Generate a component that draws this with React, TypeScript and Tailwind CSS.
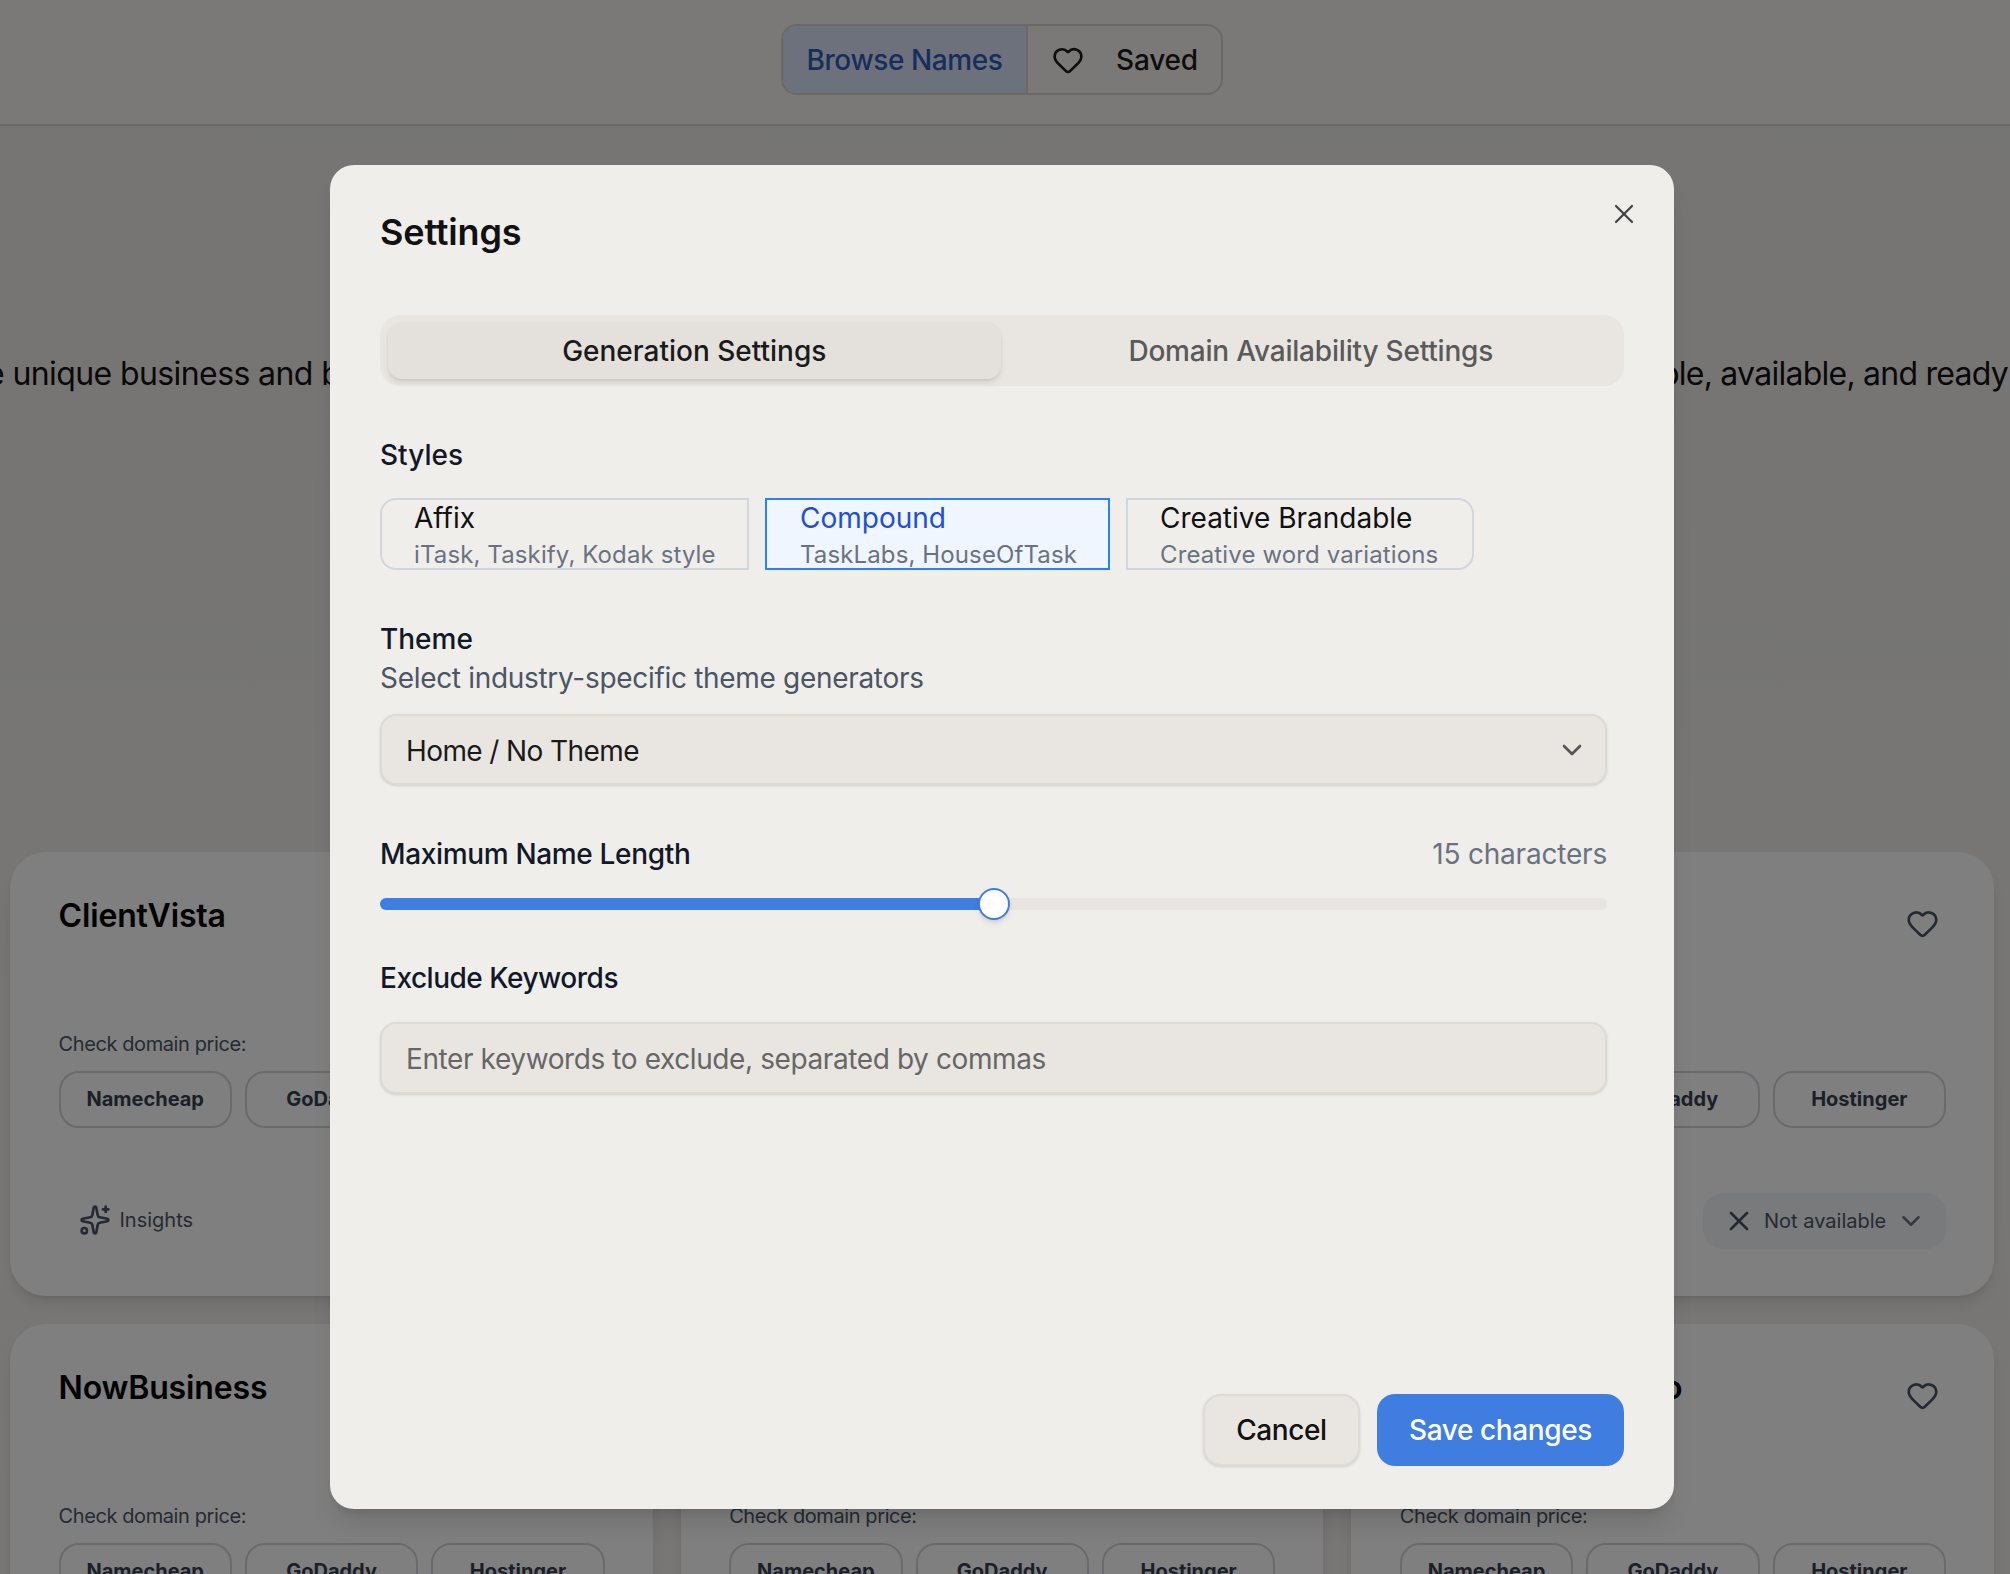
import { ChevronDown, Heart, Sparkles, X } from "lucide-react";

const names = ["ClientVista", "TaskNest", "BizHarbor", "NowBusiness", "ClientHub", "NowBusinessHero"];
const registrars = ["Namecheap", "GoDaddy", "Hostinger"];

const NameCard = ({ name }: { name: string }) => {
  return (
    <div className="h-[444px] rounded-[36px] bg-white pt-[42px] pr-[48px] pl-[48.5px] shadow-lg flex flex-col shrink-0">
      <div className="flex items-start justify-between">
        <span className="text-[32px] leading-[44px] font-semibold text-black whitespace-nowrap tracking-[-0.15px]">{name}</span>
        <Heart size={33} strokeWidth={2} className="mt-[13px] mr-[7px] text-gray-600" />
      </div>
      <span className="mt-[90px] text-[20px] leading-[28px] text-gray-600 tracking-[-0.4px]">Check domain price:</span>
      <div className="mt-[13px] grid grid-cols-3 gap-[13px]">
        {registrars.map((r) => (
          <div
            key={r}
            className="h-[57px] pb-[2px] rounded-[20px] border-2 border-gray-300 flex items-center justify-center text-[20px] font-bold text-[#374151]"
          >
            {r}
          </div>
        ))}
      </div>
      <div className="mt-[65px] flex items-center justify-between">
        <div className="flex items-center gap-[9px] pl-[20px] pb-[2px]">
          <Sparkles size={32} strokeWidth={2} className="text-gray-600" />
          <span className="text-[20px] text-gray-600">Insights</span>
        </div>
        <div className="h-[56px] w-[243px] rounded-[20px] bg-gray-100 flex items-center pl-[20px] pb-[1px] text-gray-600">
          <X size={32} strokeWidth={2} />
          <span className="ml-[9px] text-[20px]">Not available</span>
          <ChevronDown size={30} strokeWidth={2} className="ml-[10px] text-gray-500" />
        </div>
      </div>
    </div>
  );
};

const StyleOption = ({
  title,
  sub,
  classes,
}: {
  title: string;
  sub: string;
  classes: string;
}) => {
  return (
    <div className={`h-[72px] border-2 flex flex-col overflow-hidden ${classes}`}>
      <span className="text-[28px] leading-[36px]">{title}</span>
      <span className="mt-[1px] text-[24px] leading-[36px] text-gray-500 tracking-[0.12px]">{sub}</span>
    </div>
  );
};

const SettingsDialog = () => {
  return (
    <div className="absolute left-[330px] top-[165px] w-[1344px] h-[1344px] rounded-[24px] bg-[#f0eeeb] shadow-xl px-[50px] pt-[45px] pb-[43px] flex flex-col">
      <span className="text-[36px] leading-[44px] font-semibold text-[#111111] tracking-[-0.16px]">Settings</span>
      <X size={32} strokeWidth={1.7} className="absolute top-[33px] right-[34px] text-[#444444]" />

      <div className="mt-[61px] h-[71px] rounded-[20px] bg-[#e9e6e1] pt-[7px] pb-[7px] pl-[8px] pr-[7px] grid grid-cols-2 gap-[4px]">
        <div className="rounded-[14px] bg-[#e4e1dc] shadow-md flex items-center justify-center text-[28px] font-medium text-[#1a1a1a]">
          Generation Settings
        </div>
        <div className="flex items-center justify-center text-[28px] font-medium text-[#5a5a5a] tracking-[-0.2px]">
          Domain Availability Settings
        </div>
      </div>

      <div className="pr-[17px] flex flex-col">
        <span className="mt-[53px] text-[28px] leading-[32px] font-medium text-[#111827]">Styles</span>
        <div className="mt-[27px] flex gap-[16px]">
          <StyleOption
            title="Affix"
            sub="iTask, Taskify, Kodak style"
            classes="w-[369px] pl-[32px] rounded-l-[16px] border-gray-300 text-[#111111]"
          />
          <StyleOption
            title="Compound"
            sub="TaskLabs, HouseOfTask"
            classes="w-[345px] pl-[33px] border-blue-500 bg-blue-50 text-[#1d4ed8]"
          />
          <StyleOption
            title="Creative Brandable"
            sub="Creative word variations"
            classes="w-[348px] pl-[32px] rounded-r-[16px] border-gray-300 text-[#111111]"
          />
        </div>

        <span className="mt-[53px] text-[28px] leading-[32px] font-medium text-[#111827]">Theme</span>
        <span className="mt-[5px] text-[28px] leading-[36px] text-gray-600 tracking-[-0.31px]">Select industry-specific theme generators</span>
        <div className="mt-[18px] h-[71px] rounded-[16px] border-2 border-[#dedad5] bg-[#e9e6e2] shadow-sm pl-[24px] pr-[17px] flex items-center justify-between text-[28px] text-[#1a1a1a]">
          <span className="pt-[2px] tracking-[-0.6px]">Home / No Theme</span>
          <ChevronDown size={32} strokeWidth={2} className="text-[#555555]" />
        </div>

        <div className="mt-[53px] flex items-center justify-between">
          <span className="text-[28px] leading-[32px] font-medium text-[#111827] tracking-[-0.34px]">Maximum Name Length</span>
          <span className="text-[28px] leading-[32px] text-gray-500 tracking-[-0.2px]">15 characters</span>
        </div>
        <div className="relative mt-[28px] h-[12px] rounded-full bg-[#e8e5e0]">
          <div className="h-full w-1/2 rounded-full bg-[#3f7de0]" />
          <div className="absolute left-1/2 -top-[10px] -ml-[16px] w-[32px] h-[32px] rounded-full border-2 border-[#3f7de0] bg-white shadow-md" />
        </div>

        <span className="mt-[52px] text-[28px] leading-[32px] font-medium text-[#111827] tracking-[-0.48px]">Exclude Keywords</span>
        <div className="mt-[28px] h-[72px] rounded-[16px] border-2 border-[#dedad5] bg-[#e9e6e2] shadow-sm pl-[24px] flex items-center text-[28px] text-[#666666]">
          <span className="pt-[2px] tracking-[-0.4px]">Enter keywords to exclude, separated by commas</span>
        </div>
      </div>

      <div className="mt-auto flex justify-end gap-[17px]">
        <div className="h-[72px] w-[157px] rounded-[18px] border-2 border-[#dedad5] bg-[#e9e6e2] shadow-sm flex items-center justify-center text-[28px] font-medium text-[#111111] tracking-[-0.4px]">
          Cancel
        </div>
        <div className="h-[72px] w-[247px] rounded-[18px] bg-[#407de1] flex items-center justify-center text-[28px] font-medium text-white tracking-[-0.4px]">
          Save changes
        </div>
      </div>
    </div>
  );
};

export default function App() {
  return (
    <div className="relative h-[1574px] w-[2010px] overflow-hidden bg-linear-to-b from-[#ebeae7] to-[#f0eeeb] font-['Inter',sans-serif]">
      <div className="h-[126px] pt-[24px] pr-[6px] border-b-2 border-[#d4d2cf] bg-[#f4f2ef] flex justify-center">
        <div className="h-[71px] w-[442px] rounded-[16px] border-2 border-[#d4d2cd] flex overflow-hidden text-[28px] font-medium">
          <div className="w-[245px] bg-[#dbe3f8] text-[#2f5bb7] border-r-2 border-[#d4d2cd] flex items-center justify-center tracking-[-0.4px]">
            Browse Names
          </div>
          <div className="flex-1 flex items-center pl-[24px] gap-[32px] text-[#1a1a1a] tracking-[-0.2px]">
            <Heart size={32} strokeWidth={2} />
            Saved
          </div>
        </div>
      </div>

      <div className="mt-[228px] flex justify-between whitespace-nowrap text-[32px] leading-[40px] text-[#111111]">
        <span className="-ml-[14px] tracking-[-0.6px]">e unique business and br</span>
        <span className="mr-[2px] tracking-[-0.75px]">ble, available, and ready</span>
      </div>

      <div className="mt-[458px] pl-[10px] pr-[16px] grid grid-cols-3 gap-x-[28px] gap-y-[28px]">
        {names.map((n) => (
          <NameCard key={n} name={n} />
        ))}
      </div>

      <div className="absolute inset-0 bg-black/50" />
      <SettingsDialog />
    </div>
  );
}
